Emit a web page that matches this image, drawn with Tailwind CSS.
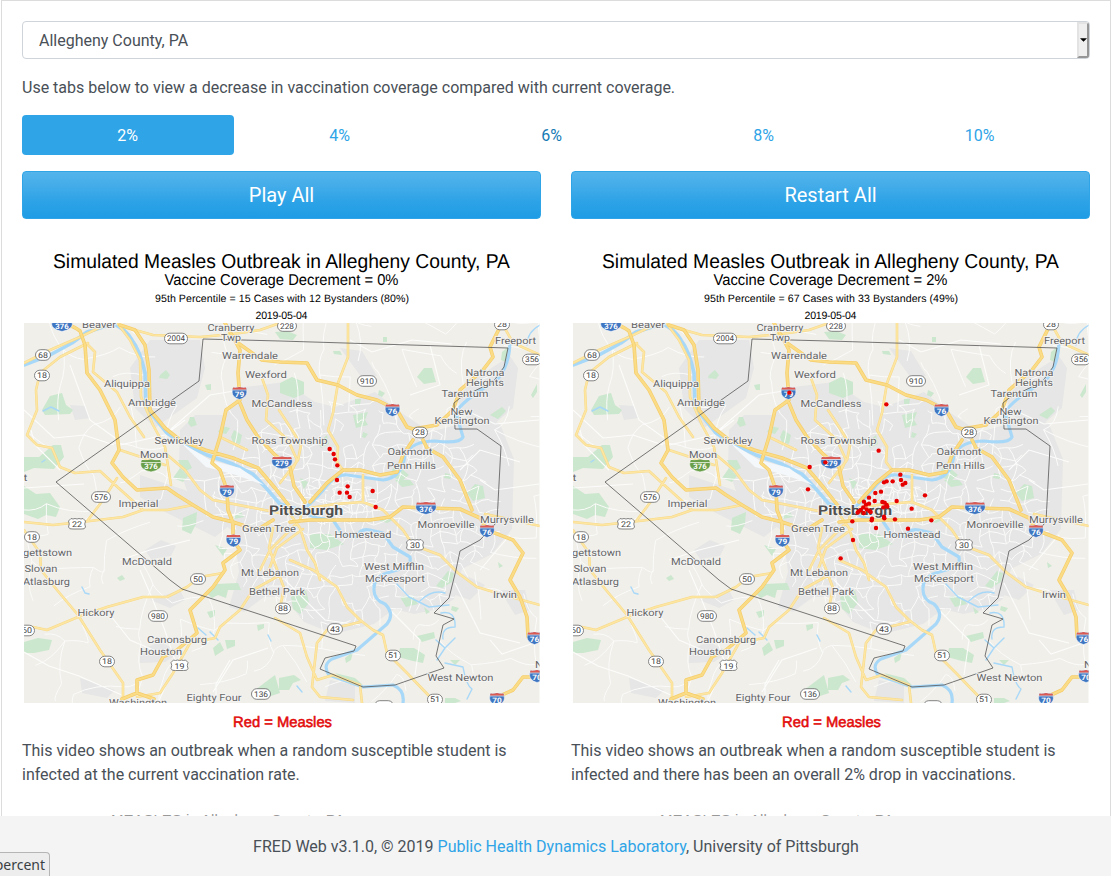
<!DOCTYPE html>
<html lang="en">
<head>
<meta charset="utf-8">
<title>FRED Web</title>
<script src="https://cdn.jsdelivr.net/npm/@tailwindcss/browser@4"></script>
</head>
<body class="relative h-[876px] overflow-hidden bg-white font-['Roboto',sans-serif] text-base leading-6 text-[#495057]">
<div class="flex h-[876px] flex-col">
<main class="ml-px h-[816px] shrink-0 overflow-hidden border-x border-t border-[#dcdcdc] px-5 pt-5">
  <div class="flex h-[38px] items-center justify-between overflow-hidden rounded border border-[#ced4da] pl-4">
    <span class="pt-0.5">Allegheny County, PA</span>
    <span class="flex h-full w-3 items-center justify-center border-2 border-t-[#e3e3e3] border-r-[#969696] border-b-[#969696] border-l-[#e3e3e3] bg-[#efefef]">
      <svg class="h-1 w-[7px] shrink-0" viewBox="0 0 7 4"><path d="M0 .3h7L3.5 3.8z" fill="#000"/></svg>
    </span>
  </div>
  <p class="mt-[17px] mb-[15px]">Use tabs below to view a decrease in vaccination coverage compared with current coverage.</p>
  <nav class="flex h-10 items-center text-center text-[#2fa4e7]">
    <a class="w-[212px] rounded bg-[#2fa4e7] pt-[9px] pr-px pb-[7px] text-white">2%</a>
    <a class="w-[212px] pt-[9px] pr-px pb-[7px]">4%</a>
    <a class="w-[212px] pt-[9px] pr-px pb-[7px] text-[#157ab5]">6%</a>
    <a class="w-[212px] pt-[9px] pr-px pb-[7px]">8%</a>
    <a class="w-[220px] pt-[9px] pr-px pb-[7px]">10%</a>
  </nav>
  <div class="mt-4 grid grid-cols-2 gap-x-[30px]">
    <button class="h-12 rounded border border-[#2fa4e7] bg-linear-to-b from-[#54b4eb] via-[#2fa4e7] via-60% to-[#1d9ce5] text-xl text-white">Play All</button>
    <button class="h-12 rounded border border-[#2fa4e7] bg-linear-to-b from-[#54b4eb] via-[#2fa4e7] via-60% to-[#1d9ce5] text-xl text-white">Restart All</button>
    <section>
      <svg class="mt-4 block h-[503px] w-[519px]" viewBox="22 235 519 503" font-family="Liberation Sans, sans-serif" text-anchor="middle" text-rendering="geometricPrecision">
        <text x="281.5" y="267.6" font-size="20" textLength="457" lengthAdjust="spacingAndGlyphs" fill="#000">Simulated Measles Outbreak in Allegheny County, PA</text>
        <text x="281.5" y="284.8" font-size="15.6" textLength="234" lengthAdjust="spacingAndGlyphs" fill="#000">Vaccine Coverage Decrement = 0%</text>
        <text x="282" y="302" font-size="10.6" textLength="254" fill="#000">95th Percentile = 15 Cases with 12 Bystanders (80%)</text>
        <text x="281.5" y="318.7" font-size="10.6" textLength="52" fill="#000">2019-05-04</text>
        <use href="#map"/>
        <g id="dots0" fill="#e60000" transform="translate(280 430) scale(.33333)"></g>
        <text x="282.5" y="727.2" font-size="15" textLength="99" lengthAdjust="spacingAndGlyphs" fill="#e30b0b" stroke="#e30b0b" stroke-width=".55">Red = Measles</text>
      </svg>
      <p class="pt-px">This video shows an outbreak when a random susceptible student is infected at the current vaccination rate.</p>
      <p class="mt-[21px] ml-[89px] font-['Liberation_Sans',sans-serif] text-[15px] whitespace-nowrap text-[#999]">MEASLES in Allegheny County, PA</p>
    </section>
    <section>
      <svg class="mt-4 block h-[503px] w-[519px]" viewBox="22 235 519 503" font-family="Liberation Sans, sans-serif" text-anchor="middle" text-rendering="geometricPrecision">
        <text x="281.5" y="267.6" font-size="20" textLength="457" lengthAdjust="spacingAndGlyphs" fill="#000">Simulated Measles Outbreak in Allegheny County, PA</text>
        <text x="281.5" y="284.8" font-size="15.6" textLength="234" lengthAdjust="spacingAndGlyphs" fill="#000">Vaccine Coverage Decrement = 2%</text>
        <text x="282" y="302" font-size="10.6" textLength="254" fill="#000">95th Percentile = 67 Cases with 33 Bystanders (49%)</text>
        <text x="281.5" y="318.7" font-size="10.6" textLength="52" fill="#000">2019-05-04</text>
        <use href="#map"/>
        <g id="dots2" fill="#e60000" transform="translate(231 380) scale(.33333)"></g>
        <text x="282.5" y="727.2" font-size="15" textLength="99" lengthAdjust="spacingAndGlyphs" fill="#e30b0b" stroke="#e30b0b" stroke-width=".55">Red = Measles</text>
      </svg>
      <p class="pt-px">This video shows an outbreak when a random susceptible student is infected and there has been an overall 2% drop in vaccinations.</p>
      <p class="mt-[21px] ml-[89px] font-['Liberation_Sans',sans-serif] text-[15px] whitespace-nowrap text-[#999]">MEASLES in Allegheny County, PA</p>
    </section>
  </div>
</main>
<footer class="h-[60px] bg-[#f4f4f4] pt-[19px] pl-px text-center">FRED Web v3.1.0, © 2019 <a class="text-[#2fa4e7]">Public Health Dynamics Laboratory</a>, University of Pittsburgh</footer>
</div>
<div class="absolute bottom-0 left-0 flex h-6 w-[50px] justify-end overflow-hidden rounded-tr border-t border-r border-[#b5b5b5] bg-[#ededed] pr-1 font-['Noto_Sans',sans-serif] text-sm leading-6 text-[#3a3f44]"><span>percent</span></div>

<svg class="absolute h-0 w-0" aria-hidden="true">
  <defs>
    <clipPath id="frame"><rect x="24" y="323" width="515.5" height="380"/></clipPath>
    <g id="map" clip-path="url(#frame)">
      <rect x="24" y="323" width="516" height="380" fill="#f0efea"/>
      <g fill="#e6e6e6">
        <path d="M150 340l50 0 5 28-8 30-42 30-20-20-5-40z"/>
        <path d="M180 430l15-15 30 0 20-28 40-5 30 20 20 5 40-15 25 20 30 20 30-8 20-10 20 10 14 35-2 70-20 25-30 15-8 30-15 10-25 5-20-5-20 15-40 10-30-12-20-25-20 0-20 15-15-5 10-35-5-40-25-20-20-15-10-30z"/>
        <path d="M456 398l20-20 34-22 8 12-5 40-35 30zM140 475l45 15 45 35-15 12-50-25-25-15zM340 348l22 3 15 25-15 2zM322 455l20-25 25 5-5 40zM145 550l16-10 15 6-5 10-20 3zM80 678l35 12-8 8-25-5zM70 405l15 1 5 12-15 2zM150 600l30-10 5 10-15 8zM140 650l20-8 20 10-15 10-25 1zM455 570l30 15-15 15-15-5zM500 590l25 0 5 20-15 5zM330 680l25 5 0 18-30-2z"/>
      </g>
      <g fill="#cbe7cd">
        <path d="M42 410l8-14 12-3 4 12 7 5-3 4-25 1zM24 457l15 0 14-12 8 0 3 12-10 12-20-1-10 4zM24 486l12 8 14-1 10 14-4 10-10-2-8 4-14-5zM24 642l14-4 14 2-3 10-15 3-10 0zM160 375l6-5 4 5-3 4-8-1zM190 417l4 0 3 8-6 2-3-4zM205 385l6-1 0 6-4 0zM183 518l14-6-1 12-5 10-9-4zM180 468l8 8-5 6-10-4zM178 460l10 0 4 8-8 4zM231 437l3-7 8 5-2 9-7-2zM222 426l8 2-4 6-8-2zM215 545l12 4-4 7zM233 517l8-5 3 5-10 2zM206 593l10-9 22-1 3 7-13 0-2 8-8-3-6 3zM213 648l7-6 4 8-9 6zM225 640l10 0 0 6-8 3zM207 612l8-2 0 6-5 2zM257 625l7-1 0 4-6 3zM291 597l15-7 3 13-9 11-7-5zM400 597l12-2 6 9-12 3zM400 648l14 0 11 7-2 8-10-2-15-4zM417 636l17-4 1 6-13 4zM436 586l12-15 6 2-2 9-10 6zM452 606l7 2-3 4-5-2zM424 607l6 5-4 2zM395 463l14 12-7 6-12-5zM395 480l15 0 4 5-12 2zM467 493l8-9 8 2 2 12-12 3zM445 473l8 2-3 4-6-1zM280 383l12-6 12 5 0 12-10 4-14-5zM353 415l15-3-3 8 3 5-12 3zM355 399l6 0-1 6-5-1zM363 432l5 2-3 4-3-1zM417 377l7-9 8 0 4 14-12 2zM379 390l6 3-3 4-4-2zM383 337l4 0 0 5-4 0zM333 351l7 0 2 4-8-1zM275 332l12-1 10 4-4 5-13-1zM502 352l6-5-2 15-5-2zM531 395l6-11 0 8-4 6zM310 534l20 0 14 10-18 6-16-2zM377 520l8-4 10 3-8 4zM450 660l10 0-5 5zM279 678l15-3 7 5-8 3-4 7-10 0zM255 690l20-15 5 18-15 5zM345 658l8-6-2 8-5 3zM335 673l20 5 8 7-15-3zM445 698l10 0 6 3-6 2-10 0zM300 478l8 4-4 8zM318 443l9-8 2 9-8 4zM498 562l5 4-4 2zM490 415l12-8 4 4-8 8zM117 578l5-3 3 4-5 2z"/>
      </g>
      <g id="streets" fill="none" stroke="#fbfbfa" stroke-width="1" stroke-linejoin="round"></g>
      <g fill="none" stroke="#fcfcfb" stroke-width="1.1">
        <path d="M24 652l25 14 30 10 45 20M24 488l60-4M140 570l12 28 12 30 12 35-18 40M110 615l20 25 35 15M213 692l20-32 35-12M120 560l30-10 40-10M120 445l45-10 20-15M350 340l22 12 40-12 40 4M60 470l-25-25-4-15M460 470l20-20 40 12M455 583l25 50 40 10M490 640l12 14 35-12M465 410l30 14 44-4M70 365l20 55 28 20M170 430l40-35 30-5M510 535l-30 35M380 600l40 40-5 35M285 580l40 40 35 5M230 660l-14 24 0 15M24 410l30 28 30-3 30 10M480 480l15 10 44-6M430 345l10 40-30 10"/>
      </g>
      <g fill="none" stroke="#a8d8f8" stroke-linejoin="round" stroke-linecap="round">
        <path stroke-width="3.6" d="M24 365L50 355 72 343 87 332 113 324Q125 328 132 340Q140 350 145 373L146 407 167 433 180 442 207 455 233 464 253 474 267 489 280 504 300 510"/>
        <path stroke-width="3.2" d="M303 510Q320 495 328 484Q338 474 347 475L383 480Q402 478 405 455Q412 441 435 441Q460 444 463 437L456 413Q460 402 497 380Q510 365 510 340M300 511L317 518 333 520 343 535 357 537Q360 528 370 530L383 533 393 547 410 557Q411 565 407 567L387 573Q373 578 374 590Q374 600 385 604Q395 614 387 624L357 650 332 659Q322 665 329 675L363 687 393 685Q405 690 403 703"/>
        <path stroke-width="1.4" d="M527 345q0-13 13-20M397 584l12 13 20 10 20-2M420 601q12-12 25-8M441 613q15-3 14 14-14 0-12 12M436 640l9 8-8 12M445 663l18 4q3 18 9 22l-5 10M43 411l8-4 8 4M82 587l3 6 4 1M198 628l8 7M210 632l8 8M268 635l3 6M42 462l3-2M297 686l5 6M455 638l-10 10"/>
      </g>
      <path d="M180 442l30 18 30 8 24 17-28-10-30-8z" fill="#f4f8fb"/>
      <g fill="none" stroke-linejoin="round" stroke-linecap="round">
        <g id="road">
          <path d="M24 363L50 350 80 337 105 325M118 324L130 340 140 360 141 397 153 425 165 447 171 485M135 330L153 335 200 337 233 334 260 330 280 323M88 343L60 357 40 373 36 390 37 410 27 435 37 445 52 448 60 467 75 473 100 471 113 483 143 510M88 345L95 352 93 372 117 392 130 417 144 437M24 522L53 525 90 521 123 517 143 510 167 510 193 505M88 520L103 500 117 478M348 323L348 357 338 383 333 413 328 430 338 447 337 462 343 470M502 323L513 343 540 355M24 530L40 553 41 570 57 590 78 615 100 650 123 683 123 699M33 627L47 630 78 617 107 607 143 597 167 597 187 587 200 577 223 573M280 575L253 590 240 610 220 627 215 638 190 643 173 673 160 693 137 697M363 475L363 502 383 510 403 530 413 545 440 555 458 573 477 587 497 593 540 605M290 560L313 570 337 587 347 607 360 620 373 630 383 635 387 653 407 673 433 700M360 622L327 630 317 643 312 687 320 697 353 700M275 618L300 633 307 657 317 680 333 675 360 685 362 703M285 507L300 528 307 550 315 563 320 580M165 453L185 470 200 490 213 500 280 513M262 378L268 395 266 420 288 440 297 460 290 475M279 410L292 430 301 445 298 460 280 483M485 514L540 526M363 502L335 504 310 508M303 529L277 548 267 575M220 437L247 450M305 500l-5 20-30 30-10 20M120 450l45 15M280 608l4-20-15-40 4-20"/>
        </g>
        <g id="hwy">
          <path d="M65 323Q75 327 80 331L85 345 87 373 100 390 115 420 119 450 112 463 123 477 137 490 167 488 177 495 193 505 213 517 233 522 257 530 273 520M225 323L233 337 240 350 238 373 240 400 226 410 220 437 212 463 220 470 227 490 228 510 233 523 233 540 240 550 223 563 225 570 213 587 190 610 197 633 177 650 163 657 153 675 137 680 137 693 122 699M137 693l17 6M240 403L247 420 258 437 275 455 290 467 294 486 305 502M238 343L262 360 280 362 307 363 317 380 338 385 357 395 377 400 397 410 407 427 413 429 437 425 453 410 460 390 483 370 493 357 490 347 502 323M120 325L135 330 145 345 149 370 150 410 165 428 180 440 205 450 233 458 258 468 275 488 290 507M310 502L327 483 343 470 360 470 380 475 397 472 403 455 413 440M290 522L310 520 370 520 390 517 403 507 427 508 460 509 480 518 487 530 513 540 523 553 510 580 520 597 527 617 528 637M423 440L427 448 443 457 460 480 472 510M493 699l20-9 10-13h18"/>
        </g>
      </g>
      <path fill="none" stroke="#555" stroke-width=".8" d="M203 339L199 381 117 439 56 482 170 580 182 589 280 621 356 646 354 651 325 658 320 669 363 687 395 685 444 668 436 656 443 625 454 619 434 613 449 598 456 570 460 551 480 540 497 522 501 446 477 429 455 429 454 403 460 398 493 382 504 367 508 348 280 341Z"/>
      <g id="badges" font-family="Roboto, sans-serif" font-size="8" fill="#444"></g>
      <g id="labels" font-family="Roboto, sans-serif" font-size="9.8" fill="#666" stroke="#f5f5f5" stroke-width="1.6" stroke-linejoin="round" paint-order="stroke"></g>
    </g>
  </defs>
</svg>
<script>
const NS = 'http://www.w3.org/2000/svg';
const el = (parent, tag, attrs, text) => {
  const n = document.createElementNS(NS, tag);
  for (const k in attrs) n.setAttribute(k, attrs[k]);
  if (text) n.textContent = text;
  parent.appendChild(n);
  return n;
};
const $ = id => document.getElementById(id);

// Highways: amber casing below a paler core
for (const [id, casing, core, a, b] of [['road', '#f7d987', '#fde6a3', 2.6, 1.6], ['hwy', '#f5cd6b', '#fbdc86', 3.6, 2.2]]) {
  const g = $(id), p = g.querySelector('path'), c = p.cloneNode();
  p.setAttribute('stroke', casing); p.setAttribute('stroke-width', a);
  c.setAttribute('stroke', core); c.setAttribute('stroke-width', b);
  g.appendChild(c);
}

// Local streets: jittered grid, dense in town
let seed = 11;
const rnd = () => (seed = (seed * 16807) % 2147483647) / 2147483647;
function net(x0, y0, x1, y1, step, prob, inside) {
  const cols = Math.ceil((x1 - x0) / step), rows = Math.ceil((y1 - y0) / step), pts = [];
  for (let j = 0; j <= rows; j++) for (let i = 0; i <= cols; i++)
    pts.push([x0 + i * step + (rnd() - .5) * step * .9, y0 + j * step + (rnd() - .5) * step * .9]);
  let d = '';
  const link = (a, b) => {
    if (rnd() > prob || !inside(a[0], a[1])) return;
    const mx = (a[0] + b[0]) / 2 + (rnd() - .5) * step * .5, my = (a[1] + b[1]) / 2 + (rnd() - .5) * step * .5;
    d += `M${a[0].toFixed(1)} ${a[1].toFixed(1)}Q${mx.toFixed(1)} ${my.toFixed(1)} ${b[0].toFixed(1)} ${b[1].toFixed(1)}`;
  };
  for (let j = 0; j < rows; j++) for (let i = 0; i < cols; i++) {
    const k = j * (cols + 1) + i;
    link(pts[k], pts[k + 1]); link(pts[k], pts[k + cols + 1]);
  }
  el($('streets'), 'path', { d });
}
const town = (x, y) => ((x - 350) / 140) ** 2 + ((y - 510) / 110) ** 2 < 1;
net(200, 390, 500, 630, 11, .72, town);
net(290, 470, 370, 525, 6, .75, (x, y) => ((x - 335) / 36) ** 2 + ((y - 497) / 22) ** 2 < 1);
net(24, 323, 540, 703, 30, .38, (x, y) => !town(x, y));

const labels = [
  ['Beaver', 99, 328, 34], ['Cranberry', 231, 331, 47], ['Twp', 231, 341, 20], ['Warrendale', 250, 358.5, 56], ['Wexford', 266, 378, 42],
  ['Aliquippa', 127, 387, 46], ['Ambridge', 152, 405.5, 48], ['McCandless', 282, 406.5, 61], ['Sewickley', 179, 443.5, 49], ['Ross Township', 289.5, 443.5, 76],
  ['Moon', 154, 458, 28], ['Imperial', 138.5, 506.5, 40], ['Green Tree', 269, 531.5, 54], ['McDonald', 147, 565, 50], ['Mt Lebanon', 270, 575.5, 58],
  ['Bethel Park', 277, 595, 56], ['Hickory', 96, 615.5, 37], ['Canonsburg', 177, 642.5, 60], ['Houston', 161, 654.5, 42], ['Eighty Four', 214, 700.5, 55],
  ['Washington', 138, 706, 58], ['Freeport', 515.5, 344, 41], ['Natrona', 485, 376, 39], ['Heights', 485, 385.5, 38], ['Tarentum', 465, 396.5, 47],
  ['New', 461.5, 415, 22], ['Kensington', 462, 423.5, 55], ['Oakmont', 410, 455, 45], ['Penn Hills', 411.5, 469, 49], ['Monroeville', 446, 527.5, 57],
  ['Murrysville', 507, 522.5, 54], ['Homestead', 363, 538, 57], ['West Mifflin', 394, 569.5, 60], ['McKeesport', 395, 581.5, 60], ['Irwin', 505, 597.5, 24],
  ['West Newton', 460.5, 681, 66], ['gettstown', 47.5, 555.5, 49], ['Slovan', 41, 571.5, 33], ['Atlasburg', 46.5, 585, 47], ['N', 539, 668, 8], ['t', 25.5, 480.5, 4],
];
for (const [t, x, y, w] of labels) el($('labels'), 'text', { x, y, textLength: w, lengthAdjust: 'spacingAndGlyphs' }, t);
el($('labels'), 'text', { x: 306, y: 514.5, textLength: 74, lengthAdjust: 'spacingAndGlyphs', 'font-size': 13.5, 'font-weight': 700, fill: '#505050' }, 'Pittsburgh');

const oval = [['68', 43, 355], ['18', 42, 375.5], ['2004', 176, 338.5], ['228', 287, 326], ['28', 502, 324.5], ['356', 532, 359.5], ['910', 367, 381],
  ['28', 420, 432.5], ['576', 101, 497], ['18', 32, 537], ['50', 198, 579], ['88', 283, 608.5], ['980', 158, 616], ['60', 27, 630.5],
  ['18', 107, 661.5], ['43', 335, 629], ['51', 393, 655.5], ['51', 435, 699.5], ['136', 261, 694], ['201', 384, 706]];
for (const [t, x, y] of oval) {
  const w = [0, 0, 15, 19, 23][t.length];
  el($('badges'), 'rect', { x: x - w / 2, y: y - 5.3, width: w, height: 10.6, rx: 5.3, fill: '#fff', stroke: '#777', 'stroke-width': .9 });
  el($('badges'), 'text', { x, y: y + 2.9, textLength: w - 5, lengthAdjust: 'spacingAndGlyphs' }, t);
}
for (const [t, x, y] of [['22', 77, 524], ['30', 415, 545], ['19', 179.5, 665.5]]) {
  el($('badges'), 'path', { d: 'M-6-5.5Q-4-4.5-2-5.5L0-5 2-5.5Q4-4.5 6-5.5L8.500-3Q7 0 8.500 3Q8 5.500 4 5H-4Q-8 5.500-8.500 3Q-7 0-8.500-3Z', transform: `translate(${x} ${y})`, fill: '#fff', stroke: '#777', 'stroke-width': .9 });
  el($('badges'), 'text', { x, y: y + 3.2, textLength: 10, lengthAdjust: 'spacingAndGlyphs' }, t);
}
const shields = [['376', 62, 325], ['79', 239.5, 393], ['76', 392.5, 410], ['279', 282, 462.5], ['79', 227, 491], ['79', 233.5, 540.5], ['376', 426, 508],
  ['76', 487, 531], ['76', 534.5, 638], ['70', 537, 676], ['70', 497, 699], ['376', 151, 465.5, 'green']];
for (const [t, x, y, green] of shields) {
  const s = t.length > 2 ? 1.4 : 1, g = el($('badges'), 'g', { transform: `translate(${x} ${y})` });
  el(g, 'path', { d: 'M-6.500-5.500Q-3-5 0-6Q3-5 6.500-5.500Q8.500 0 6 3Q4 5.500 0 6.500Q-4 5.500-6 3Q-8.500 0-6.500-5.500Z', transform: `scale(${s} 1)`, fill: green ? '#6a9f4a' : '#3f76c2', stroke: '#fff', 'stroke-width': .5 });
  el(g, 'path', { d: 'M-6.500-5.500Q-3-5 0-6Q3-5 6.500-5.500L7-3.200H-7Z', transform: `scale(${s} 1)`, fill: green ? '#6a9f4a' : '#dd5a52' });
  el(g, 'path', { d: 'M-7-3H7', transform: `scale(${s} 1)`, stroke: '#fff', 'stroke-width': .6 });
  el(g, 'text', { x: 0, y: 3.6, fill: '#fff', 'font-weight': 700, 'font-size': 7.5, textLength: 9.5 * s, lengthAdjust: 'spacingAndGlyphs' }, t);
}

const cases = {
  dots0: [[149,57],[161,72],[165,88],[172,106],[171,150],[203,169],[179,188],[201,188],[209,201],[278,183],[287,231]],
  dots2: [[28,38],[319,73],[296,212],[89,261],[136,247],[84,328],[361,284],[363,300],[338,304],[320,304],[312,307],[368,314],[376,309],[303,335],[286,339],
    [267,353],[435,346],[350,363],[284,363],[252,365],[307,366],[314,368],[267,371],[258,374],[320,375],[322,380],[310,382],[250,382],[260,388],[395,386],[242,390],
    [236,394],[233,398],[251,399],[268,393],[272,396],[217,424],[276,416],[275,421],[312,410],[313,415],[345,418],[454,421],[288,444],[384,446],[219,480],[182,535]],
};
for (const id in cases) for (const [cx, cy] of cases[id]) el($(id), 'circle', { cx, cy, r: 6.6 });
</script>
</body>
</html>
